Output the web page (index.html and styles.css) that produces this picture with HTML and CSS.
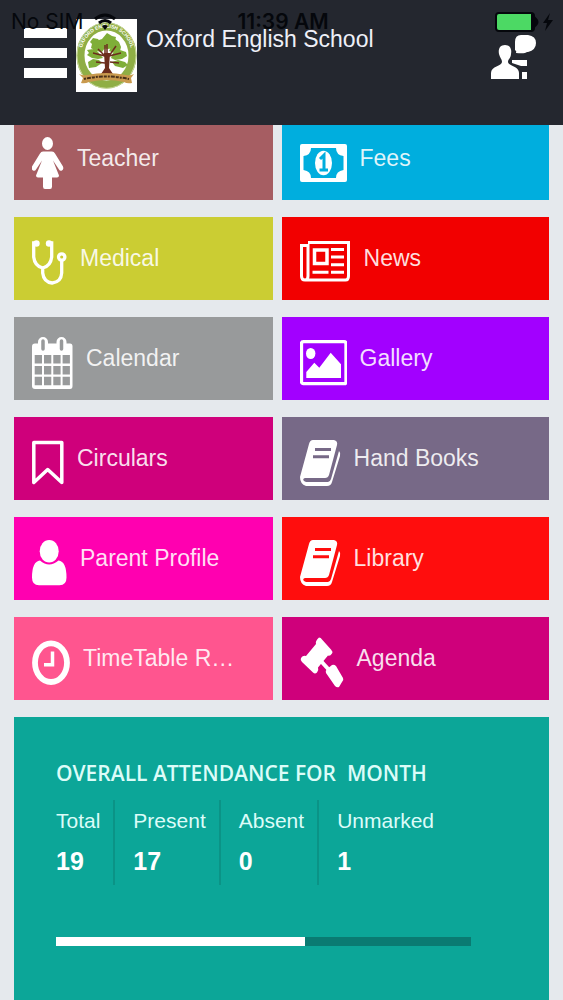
FILE: index.html
```html
<!DOCTYPE html>
<html lang="en">
<head>
<meta charset="utf-8">
<meta name="viewport" content="width=device-width, initial-scale=1">
<title>Oxford English School</title>
<link rel="stylesheet" href="styles.css">
</head>
<body>
<header class="topbar">
  <button class="menu" type="button" aria-label="Menu"><span></span><span></span><span></span></button>
  <svg class="logo" viewBox="0 0 61 73" role="img" aria-label="School crest">
    <defs><path id="arc" d="M6 45A25.500 28.500 0 1 1 55 45"/></defs>
    <rect width="61" height="73" fill="#fff"/>
    <ellipse cx="30.500" cy="36.500" rx="26" ry="29" fill="none" stroke="#8fae45" stroke-width="8"/>
    <ellipse cx="30.500" cy="36.500" rx="29.500" ry="32.800" fill="none" stroke="#c8d79c" stroke-width="1"/>
    <text class="crest"><textPath href="#arc" startOffset="50%" text-anchor="middle">OXFORD ENGLISH SCHOOL</textPath></text>
    <g fill="#7fae38">
      <path d="M31 14l5 3 4 1-1 4 3 3-4 4-6 1-7-1-4-4 2-4 3-1z"/>
      <path d="M17 19l5 1 3 4 4 5-3 4-6-1-5-3 1-4-2-2zM11 31l6-1 5 3 5 6-5 1-6-1-5-3 2-2zM12 43l5-3 6 1 3 3-6 4-7 1zM39 20l4 3 2 5-1 4-6 2-5-2 3-6zM37 34l7-3 6 2 1 4-5 3-7 1-4-2zM36 43l6-2 7 2 3 3-5 3-8-2z"/>
    </g>
    <path d="M22 30l7 7V26M29 37l-12-3M40 27l-7 10 12-3M31 25v15M20 43l9 1M43 44l-9-1" fill="none" stroke="#6c2d1c" stroke-width="1.500"/>
    <path d="M28 34h6l-1 15 4 6H25l4-6z" fill="#6c2d1c"/>
    <path d="M3 55q4 2 8 1 19-4 39 0 4 1 8-1l-3 4 1 5q-5 1-8-1-17-4-35 0-4 2-8 1l2-5z" fill="#c99a4e"/>
    <path d="M8 60q22-5 45 0" fill="none" stroke="#4a3018" stroke-width="2" stroke-dasharray="2 1 4 1 3 1"/>
  </svg>
  <h1 class="title">Oxford English School</h1>
  <button class="account" type="button" aria-label="Account messages">
    <svg width="46" height="46" viewBox="0 0 46 46" fill="#fff">
      <path d="M14 11c5 0 7 4 6 9 0 4-3 5-3 8 0 4 11 4 11 11v6H0v-6c0-7 11-7 11-11 0-3-2-4-3-8-1-5 1-9 6-9z"/>
      <path d="M30 1h7q8 1 8 8t-8 9h-1q-2 2-11 1 1-2-1-3V8q0-7 6-7zM21 26h15v6h-6l-9-3zM31 38h5v7h-5z"/>
    </svg>
  </button>
  <div class="status">
    <span class="carrier">No SIM
      <svg width="24" height="18" viewBox="0 0 24 18" fill="none" stroke="#05070c" stroke-width="3"><path d="M2 6q10-8 20 0M6 10q6-5 12 0"/><path d="M12 17l-3-4q3-2 6 0z" fill="#05070c" stroke="none"/></svg>
    </span>
    <span class="clock">11:39 AM</span>
    <svg class="battery" width="60" height="22" viewBox="0 0 60 22">
      <rect x="1" y="2" width="38" height="18" rx="3" fill="#4cd964" stroke="#05070c" stroke-width="2"/>
      <path d="M37 3v16M41 8q3 3 0 6z" stroke="#05070c" stroke-width="2" fill="#05070c"/>
      <path d="M55 2l-7 10h4l-2 8 8-11h-5z" fill="#05070c"/>
    </svg>
  </div>
</header>

<main class="page">
  <nav class="tiles" aria-label="Sections">
    <a class="tile teacher" href="#">
      <svg width="32" height="60" viewBox="0 0 32 60" fill="#fff"><ellipse cx="15.500" cy="12.500" rx="5.500" ry="6.500"/><path d="M11 20.500h9q2 0 3 2l8 13q1 3-1 4t-3-1l-6-9 6 15q0 2-2 2h-5v9q0 2.500-2 2.500h-5q-2 0-2-2.500v-9H6q-2 0-2-2l6-15-6 9q-1 2-3 1t-1-4l8-13q1-2 3-2z"/></svg>
      <span>Teacher</span></a>
    <a class="tile fees" href="#">
      <svg width="47" height="60" viewBox="0 0 47 60"><rect y="13" width="47" height="38" rx="2" fill="#fff"/><path d="M11 17h25q0 7 7.500 8v14q-7.500 1-7.500 8H11q0-7-7.500-8V25q7.500-1 7.500-8z" fill="#00aede"/><ellipse cx="23.500" cy="32" rx="8.500" ry="12.200" fill="#fff"/><path d="M20 28l4-4v15M19.500 39h8.500" fill="none" stroke="#00aede" stroke-width="3"/></svg>
      <span>Fees</span></a>
    <a class="tile medical" href="#">
      <svg width="35" height="60" viewBox="0 0 35 60" fill="none" stroke="#fff" stroke-width="3.300"><path d="M4 12H1.700v14q1 9 9 11 8-2 9-11V12H17M10.700 37v5q1 9 9.500 10 9-1 9.500-10V30"/><circle cx="29.700" cy="26" r="3.200"/><g fill="#fff" stroke="none"><circle cx="4.500" cy="12.500" r="3.200"/><circle cx="17" cy="12.500" r="3.200"/></g></svg>
      <span>Medical</span></a>
    <a class="tile news" href="#">
      <svg width="51" height="60" viewBox="0 0 51 60" fill="none" stroke="#fff" stroke-width="3"><path d="M8 11.500h40.500V45q0 4-3 4H5q-3.500 0-3.500-4V14.500H8V45q0 4-3 4"/><rect x="14.500" y="19" width="12.500" height="13.500" stroke-width="3.500"/><path d="M31 18.500h13M31 26h13M31 33.700h13M31 41.300h13M12.500 41.300h16"/></svg>
      <span>News</span></a>
    <a class="tile calendar" href="#">
      <svg width="41" height="60" viewBox="0 0 41 60"><path d="M3 12.500h35q2.500 0 2.500 3v39.500q0 3-2.500 3H3q-3 0-3-3V15.500q0-3 3-3z" fill="#fff"/><path d="M11 11v6M29.500 11v6" stroke="#fff" stroke-width="10" stroke-linecap="round"/><path d="M11 10v8M29.500 10v8" stroke="#989a9b" stroke-width="3.500" stroke-linecap="round"/><path d="M2.700 28.300h36M2.700 39.200h36M2.700 50h36" stroke="#989a9b" stroke-width="8.500" stroke-dasharray="7.300 2"/></svg>
      <span>Calendar</span></a>
    <a class="tile gallery" href="#">
      <svg width="47" height="60" viewBox="0 0 47 60" fill="#fff"><rect x="1.500" y="10.700" width="44.500" height="42" rx="2" fill="none" stroke="#fff" stroke-width="3.300"/><ellipse cx="10.700" cy="22.500" rx="4.700" ry="5.500"/><path d="M6.300 47v-6l8-9.300 5 5 11.400-15L41 33.300V47z"/></svg>
      <span>Gallery</span></a>
    <a class="tile circulars" href="#">
      <svg width="32" height="60" viewBox="0 0 32 60" fill="none" stroke="#fff" stroke-width="3.500" stroke-linejoin="round"><path d="M1.800 11.500h28v40L15.700 38.500 1.800 51.500z"/></svg>
      <span>Circulars</span></a>
    <a class="tile handbooks" href="#">
      <svg width="41" height="60" viewBox="0 0 41 60"><path d="M13 9h21q4 1 3 5l-8 30q-1 3-4 3H5q-3 1-1 3l2 1h22q2 0 3-3l8-28q2 2 1 5l-8 26q-1 4-5 4H6q-6-2-6-9L9 13q1-4 4-4z" fill="#fff"/><path d="M15 18.500h16M13 25.700h16" stroke="#776987" stroke-width="3"/></svg>
      <span>Hand Books</span></a>
    <a class="tile parent" href="#">
      <svg width="35" height="60" viewBox="0 0 35 60" fill="#fff"><ellipse cx="17.200" cy="20.300" rx="9.500" ry="11.300"/><path d="M8 29.500q9 8 18.500 0 8 1 8 17 0 7.800-7 7.800H7q-7 0-7-7.800 0-16 8-17z"/></svg>
      <span>Parent Profile</span></a>
    <a class="tile library" href="#">
      <svg width="41" height="60" viewBox="0 0 41 60"><path d="M13 9h21q4 1 3 5l-8 30q-1 3-4 3H5q-3 1-1 3l2 1h22q2 0 3-3l8-28q2 2 1 5l-8 26q-1 4-5 4H6q-6-2-6-9L9 13q1-4 4-4z" fill="#fff"/><path d="M15 18.500h16M13 25.700h16" stroke="#ff0d0d" stroke-width="3"/></svg>
      <span>Library</span></a>
    <a class="tile timetable" href="#">
      <svg width="38" height="60" viewBox="0 0 38 60" fill="none" stroke="#fff"><ellipse cx="19" cy="31.700" rx="16" ry="19.300" stroke-width="5.800"/><path d="M20.500 20.500v13.300H12" stroke-width="3.500"/></svg>
      <span>TimeTable R…</span></a>
    <a class="tile agenda" href="#">
      <svg width="44" height="60" viewBox="0 0 44 60" fill="#fff"><path d="M19 6.500q2 0 3 2l9 10q2 2 1 4-2 3-4 2l-10 12q1 3-1 5-2 2-4 0L2 31q-2-2-1-4 2-3 5-2l10-12q-1-3 3-6.500z"/><path d="M20 29l10 11" stroke="#fff" stroke-width="4"/><path d="M27 38l5-4q2-1 4 1l7 12q1 2-1 4l-3 5q-2 1-4-1L26 42q-1-2 1-4z"/></svg>
      <span>Agenda</span></a>
  </nav>

  <section class="attendance">
    <h2>OVERALL ATTENDANCE FOR&nbsp; MONTH</h2>
    <dl class="stats">
      <div><dt>Total</dt><dd>19</dd></div>
      <div><dt>Present</dt><dd>17</dd></div>
      <div><dt>Absent</dt><dd>0</dd></div>
      <div><dt>Unmarked</dt><dd>1</dd></div>
    </dl>
    <progress value="60" max="100" aria-label="Attendance"></progress>
  </section>
</main>
</body>
</html>
```

FILE: styles.css
```css
* { box-sizing: border-box; }
body {
  margin: 0;
  background: #e5e9ed;
  color: #fff;
  font-family: "Liberation Sans", Arial, sans-serif;
}
h1, h2, dl, dd { margin: 0; }
button { padding: 0; border: 0; background: none; cursor: pointer; }
svg { display: block; flex: none; }

.topbar {
  position: fixed;
  inset: 0 0 auto;
  z-index: 2;
  height: 125px;
  padding: 19px 26px 0 24px;
  display: flex;
  align-items: flex-start;
  background: #24272f;
}
.menu { display: grid; gap: 10px; width: 43px; margin: 9px 9px 0 0; }
.menu span { height: 10px; background: #fff; }
.logo { width: 61px; height: 73px; }
.crest { font-size: 5px; font-weight: bold; fill: #fff; }
.title {
  flex: 1;
  margin-left: 9px;
  font-size: 23px;
  font-weight: normal;
  line-height: 40px;
  color: #eef0f8;
}
.account { margin-top: 15px; }

.status {
  position: absolute;
  inset: 9px 8px auto 11px;
  display: grid;
  grid-template-columns: 1fr auto 1fr;
  align-items: center;
  font-family: Inter, sans-serif;
  font-size: 21px;
  line-height: 26px;
  color: #05070c;
  pointer-events: none;
}
.carrier { display: flex; align-items: center; gap: 10px; }
.clock { font-weight: 600; }
.battery { justify-self: end; }

.page {
  min-height: 100vh;
  padding: 117px 14px 0;
  display: flex;
  flex-direction: column;
  gap: 17px;
}
.tiles {
  display: grid;
  grid-template-columns: 29fr 30fr;
  gap: 17px 9px;
}
.tile {
  display: flex;
  gap: 13px;
  height: 83px;
  padding: 14px 8px 0 18px;
  color: rgba(255, 255, 255, 0.88);
  font-size: 23px;
  line-height: 54px;
  white-space: nowrap;
  text-decoration: none;
}
.teacher { background: #a65d62; }
.fees { background: #00aede; }
.medical { background: #cbcd33; }
.news { background: #f20000; }
.calendar { background: #989a9b; }
.gallery { background: #a200ff; }
.circulars { background: #cf007b; }
.handbooks { background: #776987; }
.parent { background: #ff00b0; }
.library { background: #ff0d0d; }
.timetable { background: #ff558f; }
.agenda { background: #cf007b; }

.attendance {
  flex: 1;
  padding: 40px 42px;
  background: #0ca698;
  color: #dcfcf8;
}
.attendance h2 {
  font-family: "Open Sans", "Noto Sans", sans-serif;
  font-size: 21px;
  font-weight: 600;
  line-height: 32px;
  white-space: nowrap;
}
.stats { display: flex; margin-top: 11px; }
.stats div { padding: 0 13px 3px 18px; border-right: 2px solid #0b9386; }
.stats div:first-child { padding-left: 0; }
.stats div:last-child { border: 0; }
.stats dt { font-size: 21px; line-height: 41px; }
.stats dd { font-size: 25px; font-weight: bold; line-height: 41px; color: #fff; }
progress {
  display: block;
  width: 92%;
  height: 9px;
  margin-top: 52px;
  border: 0;
  appearance: none;
  background: #0a7b72;
}
progress::-webkit-progress-bar { background: #0a7b72; }
progress::-webkit-progress-value { background: #fff; }
```
